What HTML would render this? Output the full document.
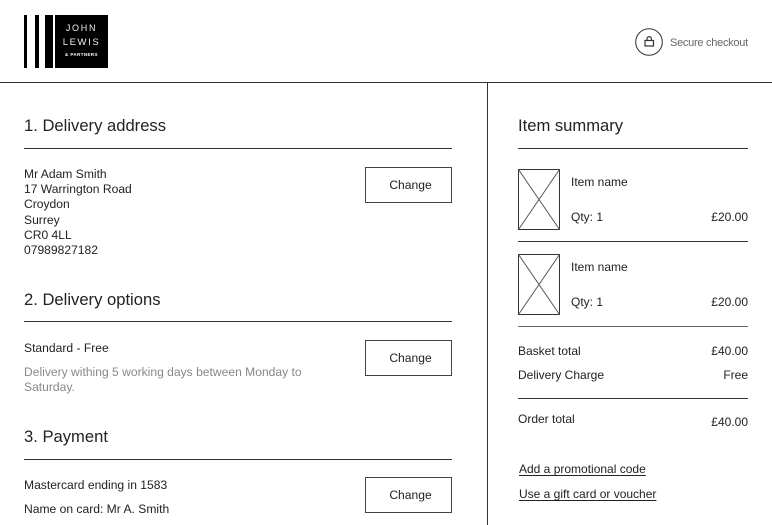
<!DOCTYPE html>
<html lang="en">
<head>
<meta charset="utf-8">
<title>Checkout</title>
<style>
html,body{margin:0;padding:0;background:#fff}
body{position:relative;width:772px;height:525px;overflow:hidden;font-family:"Liberation Sans",Arial,sans-serif;color:#222;font-size:12px}
.a{position:absolute;white-space:nowrap}
.t{line-height:16px;height:16px}
.f{font-size:12.1px}
.r{text-align:right}
.h{font-size:16.6px;line-height:20px;color:#222}
.l{position:absolute;height:1px;background:#333}
.btn{position:absolute;left:365px;width:81px;padding-left:4px;height:34px;border:1px solid #444;text-align:center;line-height:34px;font-size:12.1px;color:#222}
.bar{position:absolute;background:#000;top:15px;height:53px}
u{text-underline-offset:2px}
</style>
</head>
<body>
<div class="bar" style="left:24px;width:3px"></div>
<div class="bar" style="left:35px;width:4px"></div>
<div class="bar" style="left:45px;width:8px"></div>
<div class="bar" style="left:55px;width:53px"></div>
<div class="a" style="left:55px;width:53px;top:23px;text-align:center;color:#eee;font-size:9px;line-height:10px;letter-spacing:1.7px">JOHN</div>
<div class="a" style="left:55px;width:53px;top:38px;text-align:center;color:#eee;font-size:9.5px;line-height:10px;letter-spacing:1.6px">LEWIS</div>
<div class="a" style="left:55px;width:53px;top:52px;text-align:center;color:#fff;font-size:4.5px;line-height:6px;font-weight:bold;letter-spacing:.4px">&amp; PARTNERS</div>

<svg class="a" style="left:635px;top:28px" width="28" height="28" viewBox="0 0 28 28" fill="none" stroke="#333">
<circle cx="14" cy="14" r="13.3"/>
<rect x="10" y="12.500" width="8.500" height="5.500" stroke-width="1.200"/>
<path d="M12 12.500V10.800a2.200 2.200 0 0 1 4.400 0v1.700" stroke-width="1.200"/>
</svg>
<div class="a t" style="left:670px;top:34.500px;font-size:11px;color:#666;letter-spacing:-.27px">Secure checkout</div>

<div class="l" style="left:0;top:82px;width:772px"></div>
<div class="a" style="left:487px;top:82px;width:1px;height:443px;background:#333"></div>

<div class="a h" style="left:24px;top:116px">1. Delivery address</div>
<div class="l" style="left:24px;top:148px;width:428px"></div>
<div class="a f" style="left:24px;top:167px;line-height:15.2px">Mr Adam Smith<br>17 Warrington Road<br>Croydon<br>Surrey<br>CR0 4LL<br>07989827182</div>
<div class="btn" style="top:167px">Change</div>

<div class="a h" style="left:24px;top:290px">2. Delivery options</div>
<div class="l" style="left:24px;top:321px;width:428px"></div>
<div class="a t f" style="left:24px;top:340px">Standard - Free</div>
<div class="a f" style="left:24px;top:365px;line-height:15px;color:#888">Delivery withing 5 working days between Monday to<br>Saturday.</div>
<div class="btn" style="top:340px">Change</div>

<div class="a h" style="left:24px;top:427px">3. Payment</div>
<div class="l" style="left:24px;top:459px;width:428px"></div>
<div class="a t f" style="left:24px;top:477px">Mastercard ending in 1583</div>
<div class="a t f" style="left:24px;top:501px">Name on card: Mr A. Smith</div>
<div class="btn" style="top:477px">Change</div>

<div class="a h" style="left:518px;top:116px">Item summary</div>
<div class="l" style="left:518px;top:148px;width:230px"></div>

<svg class="a" style="left:518px;top:169px" width="42" height="61" viewBox="0 0 42 61" fill="none" stroke="#333">
<rect x=".5" y=".5" width="41" height="60"/>
<path d="M.5 .5L41.500 60.500M41.500 .5L.5 60.500" stroke="#555"/>
</svg>
<div class="a t" style="left:571px;top:174px">Item name</div>
<div class="a t" style="left:571px;top:209px">Qty: 1</div>
<div class="a t r" style="right:24px;top:209px">£20.00</div>
<div class="l" style="left:518px;top:241px;width:230px"></div>

<svg class="a" style="left:518px;top:254px" width="42" height="61" viewBox="0 0 42 61" fill="none" stroke="#333">
<rect x=".5" y=".5" width="41" height="60"/>
<path d="M.5 .5L41.500 60.500M41.500 .5L.5 60.500" stroke="#555"/>
</svg>
<div class="a t" style="left:571px;top:259px">Item name</div>
<div class="a t" style="left:571px;top:294px">Qty: 1</div>
<div class="a t r" style="right:24px;top:294px">£20.00</div>
<div class="l" style="left:518px;top:326px;width:230px;background:#666"></div>

<div class="a t" style="left:518px;top:343px">Basket total</div>
<div class="a t r" style="right:24px;top:343px">£40.00</div>
<div class="a t" style="left:518px;top:367px">Delivery Charge</div>
<div class="a t r" style="right:24px;top:367px">Free</div>
<div class="l" style="left:518px;top:398px;width:230px"></div>
<div class="a t" style="left:518px;top:411px">Order total</div>
<div class="a t r" style="right:24px;top:414px">£40.00</div>

<div class="a t" style="left:519px;top:461px"><u>Add a promotional code</u></div>
<div class="a t" style="left:519px;top:486px"><u>Use a gift card or voucher</u></div>
</body>
</html>
